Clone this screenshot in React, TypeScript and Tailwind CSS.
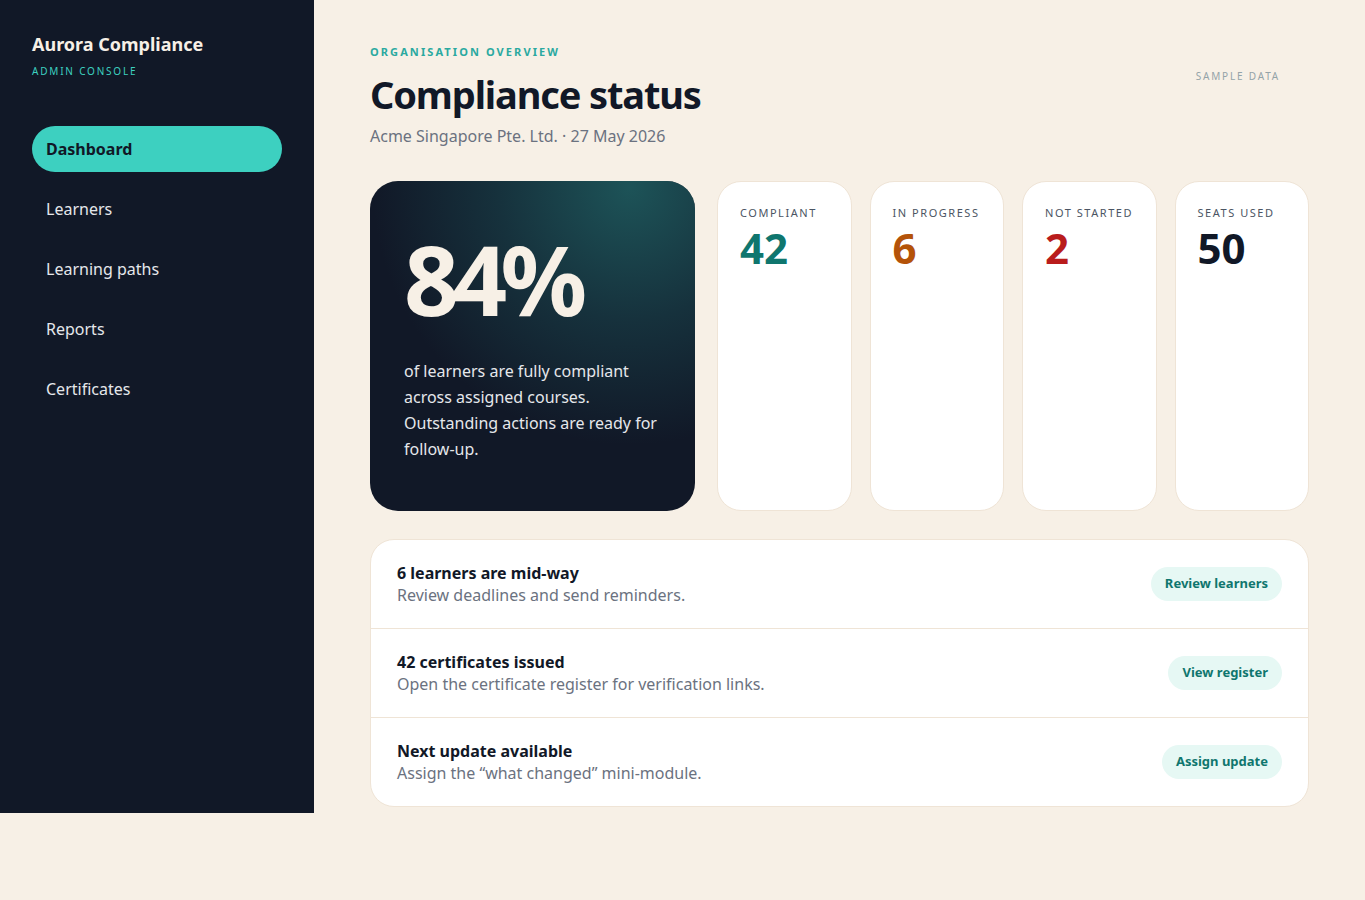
import React from 'react';

const nav = ['Dashboard', 'Learners', 'Learning paths', 'Reports', 'Certificates'];

const stats = [
  { label: 'Compliant', value: '42', color: 'text-[#0f766e]' },
  { label: 'In progress', value: '6', color: 'text-[#b45309]' },
  { label: 'Not started', value: '2', color: 'text-[#b91c1c]' },
  { label: 'Seats used', value: '50', color: 'text-[#111827]' },
];

const actions = [
  { title: '6 learners are mid-way', body: 'Review deadlines and send reminders.', cta: 'Review learners' },
  { title: '42 certificates issued', body: 'Open the certificate register for verification links.', cta: 'View register' },
  { title: 'Next update available', body: 'Assign the \u201cwhat changed\u201d mini-module.', cta: 'Assign update' },
];

export default function App() {
  return (
    <div className="min-h-screen bg-[#f7f0e6] font-['Noto_Sans',sans-serif]">
      <div className="flex">
        {/* Sidebar */}
        <aside className="w-[314px] shrink-0 bg-[#111827] px-8 pt-[33px]">
          <div className="text-[18px] font-bold leading-[22px] text-[#f7f0e6]">Aurora Compliance</div>
          <div className="mt-[10px] text-[10px] leading-[12px] tracking-[0.18em] text-[#3dd0c0]">ADMIN CONSOLE</div>
          <nav className="mt-[49px] flex w-[250px] flex-col gap-[14px]">
            {nav.map((item, i) => (
              <a
                key={item}
                className={`flex h-[46px] items-center rounded-full px-[14px] text-[16px] ${
                  i === 0 ? 'bg-[#3dd0c0] font-bold text-[#111827]' : 'text-[#e5e7eb]'
                }`}
              >
                {item}
              </a>
            ))}
          </nav>
        </aside>

        {/* Main */}
        <main className="flex-1 px-14 pt-[45px] pb-[6px]">
          <div className="flex items-start justify-between">
            <div>
              <div className="text-[11px] font-bold leading-[14px] tracking-[0.19em] text-[#2aa9a0]">ORGANISATION OVERVIEW</div>
              <h1 className="mt-[10px] text-[38px] font-bold leading-[50px] tracking-[-0.03em] text-[#111827]">Compliance status</h1>
              <div className="mt-[5px] text-[16px] leading-[24px] text-[#6b7280]">Acme Singapore Pte. Ltd. · 27 May 2026</div>
            </div>
            <div className="mt-[24px] pr-[29px] text-[10px] tracking-[0.18em] text-[#94a3a8]">SAMPLE DATA</div>
          </div>

          <div className="mt-[33px] flex gap-[22px]">
            <div className="relative h-[330px] w-[325px] shrink-0 overflow-hidden rounded-[28px] bg-[#111827] px-[34px] pt-[50px]">
              <div className="pointer-events-none absolute inset-0 bg-[radial-gradient(circle_at_80%_2%,rgba(32,98,100,0.8)_0%,rgba(26,70,78,0.55)_32%,rgba(17,24,39,0)_62%)]" />
              <div className="relative text-[96px] font-bold leading-[96px] tracking-[-0.07em] text-[#f7f0e6]">84%</div>
              <p className="relative mt-[31px] text-[16px] leading-[26px] text-[#e5e7eb]">
                of learners are fully compliant across assigned courses. Outstanding actions are ready for follow-up.
              </p>
            </div>

            <div className="grid flex-1 grid-cols-4 gap-[18px]">
              {stats.map((s) => (
                <div key={s.label} className="h-[330px] rounded-[24px] border border-[#efe4d6] bg-white px-[22px] pt-[23px]">
                  <div className="whitespace-nowrap text-[11px] leading-[16px] tracking-[0.14em] text-[#4b5563]">{s.label.toUpperCase()}</div>
                  <div className={`mt-[3px] text-[42px] font-bold leading-[48px] ${s.color}`}>{s.value}</div>
                </div>
              ))}
            </div>
          </div>

          <div className="mt-[28px] overflow-hidden rounded-[24px] border border-[#efe4d6] bg-white">
            {actions.map((a, i) => (
              <div
                key={a.title}
                className={`flex items-center justify-between px-[26px] py-[22px] ${i > 0 ? 'border-t border-[#efe4d6]' : ''}`}
              >
                <div>
                  <div className="text-[16px] font-bold leading-[22px] text-[#111827]">{a.title}</div>
                  <div className="text-[16px] leading-[22px] text-[#6b7280]">{a.body}</div>
                </div>
                <button className="h-[34px] rounded-full bg-[#e6f8f4] px-[14px] text-[13px] font-bold text-[#0f766e]">
                  {a.cta}
                </button>
              </div>
            ))}
          </div>
        </main>
      </div>
    </div>
  );
}
